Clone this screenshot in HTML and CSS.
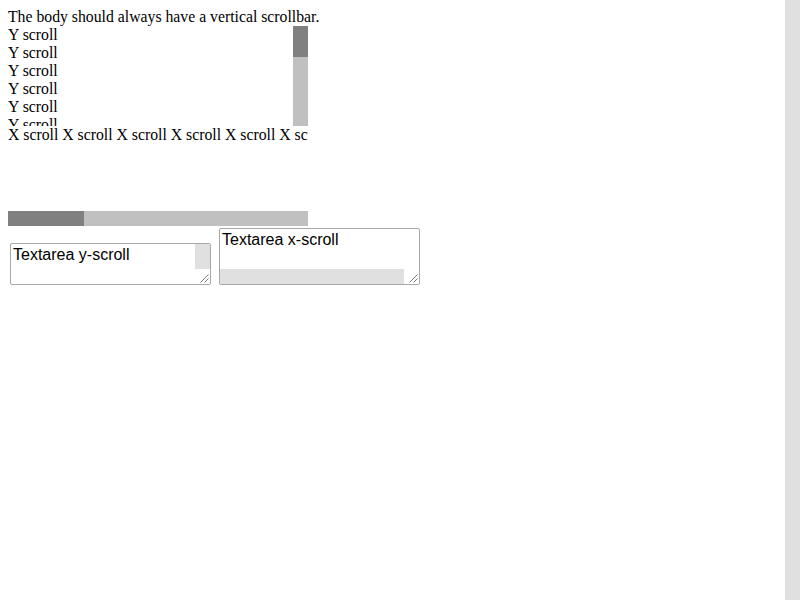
FILE: index.html
```html
<!DOCTYPE html>
<html>
<head>
<meta charset="utf-8">
<link rel="stylesheet" href="styles.css">
</head>
<body>
<div class="intro">The body should always have a vertical scrollbar.</div>
<div class="ybox">
  <div class="ycontent">Y scroll<br>Y scroll<br>Y scroll<br>Y scroll<br>Y scroll<br>Y scroll<br>Y scroll<br>Y scroll<br>Y scroll<br>Y scroll<br>Y scroll<br>Y scroll<br>Y scroll<br>Y scroll<br>Y scroll<br>Y scroll<br>Y scroll<br>Y scroll</div>
  <div class="vbar"><div class="vthumb"></div></div>
</div>
<div class="xbox">
  <div class="xcontent">X scroll X scroll X scroll X scroll X scroll X scroll X scroll X scroll X scroll X scroll X scroll X scroll X scroll X scroll X scroll X scroll X scroll X scroll X scroll X scroll X scroll X scroll</div>
  <div class="hbar"><div class="hthumb"></div></div>
</div>
<div class="areas">
  <div class="tawrap tawrap-y">
    <textarea class="ta">Textarea y-scroll</textarea>
    <div class="tatrack"></div>
    <div class="corner"><svg width="15" height="15" viewBox="0 0 15 15"><path d="M5.5 13.5 L13.5 5.5 M9.5 13.5 L13.5 9.5" stroke="#7a7a7a" stroke-width="1" fill="none"/></svg></div>
  </div>
  <div class="tawrap tawrap-x">
    <textarea class="ta" wrap="off">Textarea x-scroll</textarea>
    <div class="tatrack"></div>
    <div class="corner"><svg width="15" height="15" viewBox="0 0 15 15"><path d="M5.5 13.5 L13.5 5.5 M9.5 13.5 L13.5 9.5" stroke="#7a7a7a" stroke-width="1" fill="none"/></svg></div>
  </div>
</div>
<div class="bodybar"></div>
</body>
</html>
```
FILE: styles.css
```css
body {
  margin: 8px;
  font-family: "Liberation Serif", "Times New Roman", serif;
  font-size: 15.75px;
  line-height: 18px;
  color: #000;
  background: #fff;
}
.bodybar {
  position: fixed;
  top: 0;
  right: 0;
  bottom: 0;
  width: 15px;
  background: #e0e0e0;
}
.ybox {
  display: flex;
  width: 300px;
  height: 100px;
}
.ycontent {
  flex: 1;
  overflow: hidden;
}
.vbar {
  width: 15px;
  background: #c0c0c0;
}
.vthumb {
  height: 31px;
  background: #808080;
}
.xbox {
  display: flex;
  flex-direction: column;
  width: 300px;
  height: 100px;
}
.xcontent {
  flex: 1;
  overflow: hidden;
  white-space: nowrap;
}
.hbar {
  height: 15px;
  display: flex;
  background: #c0c0c0;
}
.hthumb {
  width: 76px;
  background: #808080;
}
.areas {
  display: flex;
  align-items: flex-end;
  gap: 4px;
}
.tawrap {
  box-sizing: border-box;
  margin: 2px;
  width: 201px;
  border: 1px solid #a8a8a8;
  border-radius: 2px;
  overflow: hidden;
  display: grid;
  grid-template-columns: 1fr 15px;
  grid-template-rows: 1fr 15px;
  background: #fff;
}
.tawrap-y {
  height: 42px;
}
.tawrap-x {
  height: 57px;
}
.ta {
  min-width: 0;
  min-height: 0;
  margin: 0;
  padding: 2px;
  border: none;
  outline: none;
  resize: none;
  overflow: hidden;
  background: transparent;
  font-family: "Liberation Sans", Arial, sans-serif;
  font-size: 16px;
  line-height: normal;
  color: #000;
  white-space: pre;
}
.tawrap-y .ta {
  grid-column: 1;
  grid-row: 1 / span 2;
}
.tawrap-y .tatrack {
  grid-column: 2;
  grid-row: 1;
}
.tawrap-x .ta {
  grid-column: 1 / span 2;
  grid-row: 1;
}
.tawrap-x .tatrack {
  grid-column: 1;
  grid-row: 2;
}
.tatrack {
  background: #e0e0e0;
}
.corner {
  grid-column: 2;
  grid-row: 2;
  background: #fff;
}
.corner svg {
  display: block;
}
```
